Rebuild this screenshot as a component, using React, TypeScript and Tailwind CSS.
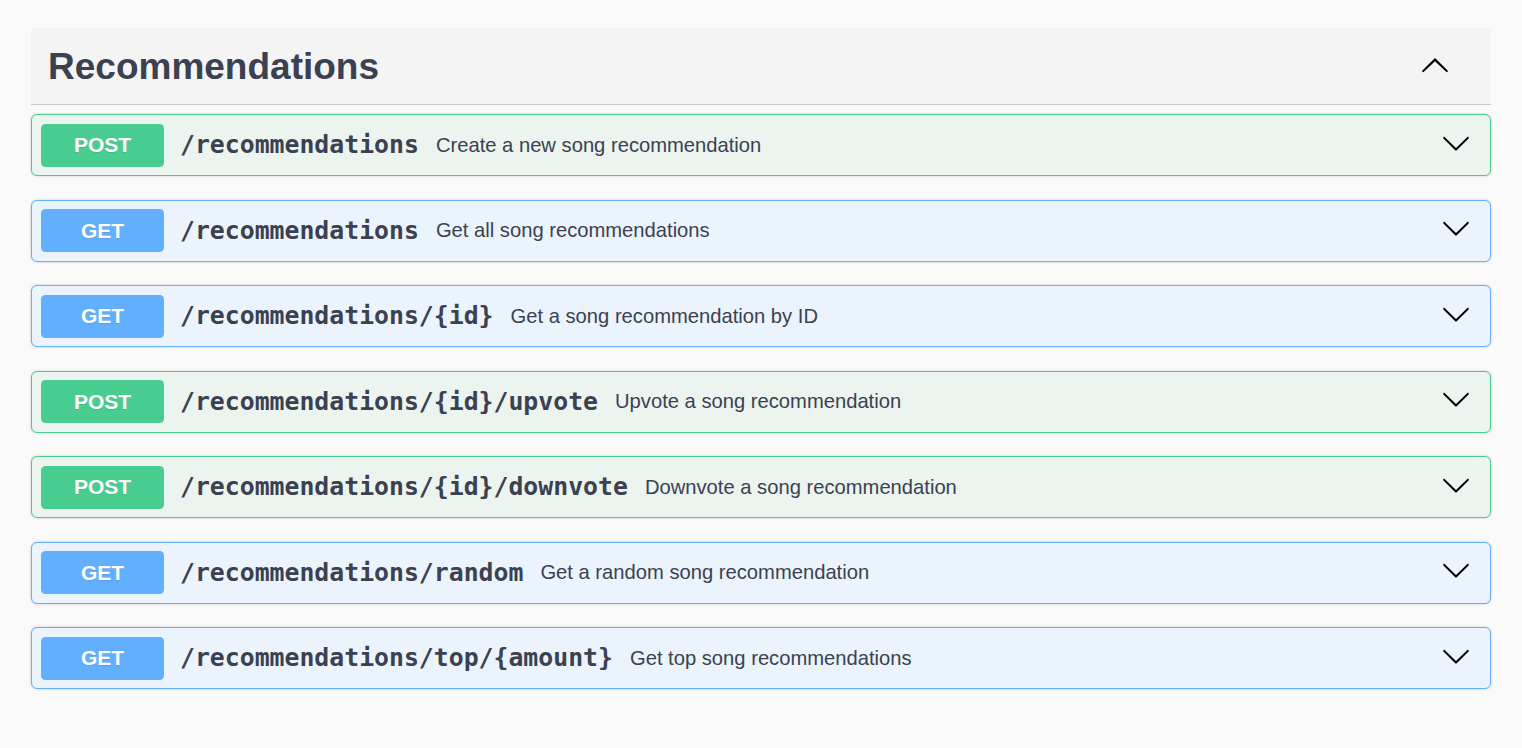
import React from 'react';

type Op = { method: 'POST' | 'GET'; path: string; summary: string };

const ops: Op[] = [
  { method: 'POST', path: '/recommendations', summary: 'Create a new song recommendation' },
  { method: 'GET', path: '/recommendations', summary: 'Get all song recommendations' },
  { method: 'GET', path: '/recommendations/{id}', summary: 'Get a song recommendation by ID' },
  { method: 'POST', path: '/recommendations/{id}/upvote', summary: 'Upvote a song recommendation' },
  { method: 'POST', path: '/recommendations/{id}/downvote', summary: 'Downvote a song recommendation' },
  { method: 'GET', path: '/recommendations/random', summary: 'Get a random song recommendation' },
  { method: 'GET', path: '/recommendations/top/{amount}', summary: 'Get top song recommendations' },
];

const Arrow: React.FC<{ up?: boolean }> = ({ up }) => (
  <svg
    viewBox="0 0 20 20"
    className={up ? 'h-[30px] w-[30px] rotate-180' : 'mb-[5px] h-[30px] w-[30px]'}
    fill="#000"
  >
    <path d="M17.418 6.109c.272-.268.709-.268.979 0s.271.701 0 .969l-7.908 7.83c-.27.268-.707.268-.979 0l-7.908-7.83c-.27-.268-.27-.701 0-.969.271-.268.709-.268.979 0L10 13.25l7.418-7.141z" />
  </svg>
);

const OpBlock: React.FC<{ op: Op }> = ({ op }) => {
  const post = op.method === 'POST';
  return (
    <div
      className={
        post
          ? 'mb-[23.5px] flex h-[62px] items-center rounded-[6px] border border-[#49cc90] bg-[#ebf4ef] pl-[9px] pr-[19px] shadow-[0_0_3px_rgba(0,0,0,0.19)]'
          : 'mb-[23.5px] flex h-[62px] items-center rounded-[6px] border border-[#61affe] bg-[#ebf3fc] pl-[9px] pr-[19px] shadow-[0_0_3px_rgba(0,0,0,0.19)]'
      }
    >
      <span
        className={
          post
            ? 'flex h-[43px] w-[123px] shrink-0 items-center justify-center rounded-[4.5px] bg-[#49cc90] text-[21px] font-bold text-white [text-shadow:0_1px_0_rgba(0,0,0,0.1)]'
            : 'flex h-[43px] w-[123px] shrink-0 items-center justify-center rounded-[4.5px] bg-[#61affe] text-[21px] font-bold text-white [text-shadow:0_1px_0_rgba(0,0,0,0.1)]'
        }
      >
        {op.method}
      </span>
      <span className="pl-[16px] pr-[17px] font-['DejaVu_Sans_Mono',monospace] text-[24.8px] font-bold text-[#3b4151]">
        {op.path}
      </span>
      <span className="flex-1 text-[20.2px] text-[#3b4151]">{op.summary}</span>
      <Arrow />
    </div>
  );
};

export default function App() {
  return (
    <div className="min-h-[748px] bg-[#fafafa] px-[31px] pt-[28px] font-['Liberation_Sans',Arial,sans-serif]">
      <div className="mb-[9px] flex h-[77px] items-center justify-between border-b border-[#cacacd] bg-[#f4f4f4] pl-[17px] pr-[41px]">
        <h3 className="pt-[2px] text-[37px] font-bold text-[#3b4151]">Recommendations</h3>
        <Arrow up />
      </div>
      <div>
        {ops.map((op, i) => (
          <OpBlock key={i} op={op} />
        ))}
      </div>
    </div>
  );
}
